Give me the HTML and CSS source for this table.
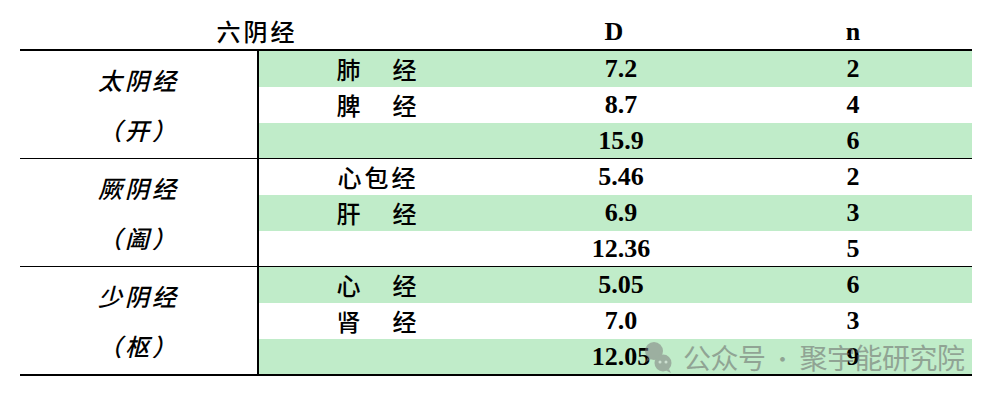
FILE: index.html
```html
<!DOCTYPE html>
<html lang="zh-CN">
<head>
<meta charset="utf-8">
<title>六阴经</title>
<link rel="stylesheet" href="styles.css">
</head>
<body>
<div class="page">
  <div class="table">
    <div class="head">
      <div class="h-name">六阴经</div>
      <div class="h-num h-d">D</div>
      <div class="h-num">n</div>
    </div>
    <div class="group">
      <div class="label"><span>太阴经</span><span>（开）</span></div>
      <div class="rows">
        <div class="row green"><span class="cjk wide">肺　经</span><span class="num d">7.2</span><span class="num">2</span></div>
        <div class="row"><span class="cjk wide">脾　经</span><span class="num d">8.7</span><span class="num">4</span></div>
        <div class="row green last"><span class="cjk"></span><span class="num d">15.9</span><span class="num">6</span></div>
      </div>
    </div>
    <div class="group">
      <div class="label"><span>厥阴经</span><span>（阖）</span></div>
      <div class="rows">
        <div class="row"><span class="cjk">心包经</span><span class="num d">5.46</span><span class="num">2</span></div>
        <div class="row green"><span class="cjk wide">肝　经</span><span class="num d">6.9</span><span class="num">3</span></div>
        <div class="row last"><span class="cjk"></span><span class="num d">12.36</span><span class="num">5</span></div>
      </div>
    </div>
    <div class="group end">
      <div class="label"><span>少阴经</span><span>（枢）</span></div>
      <div class="rows">
        <div class="row green"><span class="cjk wide">心　经</span><span class="num d">5.05</span><span class="num">6</span></div>
        <div class="row"><span class="cjk wide">肾　经</span><span class="num d">7.0</span><span class="num">3</span></div>
        <div class="row green last"><span class="cjk"></span><span class="num d">12.05</span><span class="num">9</span></div>
      </div>
    </div>
  </div>
  <div class="watermark">
    <svg class="wm-icon" width="30" height="34" viewBox="0 0 30 34">
      <circle cx="11" cy="11" r="9" fill="#7f7f7f"/>
      <path d="M4 18 L3 22 L8 19 Z" fill="#7f7f7f"/>
      <circle cx="20" cy="23" r="8.5" fill="#7f7f7f"/>
      <path d="M26 29 L28 33 L23 30.5 Z" fill="#7f7f7f"/>
      <circle cx="17" cy="22" r="1.5" fill="#d8d8d8"/>
      <circle cx="23" cy="22" r="1.5" fill="#d8d8d8"/>
    </svg>
    <span class="wm-text">公众号</span><span class="wm-dot">·</span><span class="wm-text">聚宇能研究院</span>
  </div>
</div>
</body>
</html>
```
FILE: styles.css
```css
html, body {
  margin: 0;
  padding: 0;
  background: #ffffff;
}
.page {
  position: relative;
  width: 996px;
  height: 400px;
}
.table {
  margin-left: 20px;
  width: 952px;
  color: #000;
}
.head {
  display: grid;
  grid-template-columns: 474px 240px 238px;
  height: 49px;
  border-bottom: 2px solid #000;
}
.h-name {
  font-family: "Noto Sans CJK SC", sans-serif;
  font-weight: 500;
  font-size: 24px;
  letter-spacing: 3px;
  line-height: 36px;
  padding-top: 13px;
  text-align: center;
}
.h-num {
  font-family: "Liberation Serif", serif;
  font-weight: bold;
  font-size: 26px;
  line-height: 36px;
  padding-top: 14px;
  text-align: center;
}
.group {
  display: flex;
  border-bottom: 1px solid #000;
}
.group.end {
  border-bottom-width: 2px;
}
.label {
  width: 237px;
  border-right: 2px solid #000;
  display: flex;
  flex-direction: column;
  justify-content: center;
  align-items: center;
  font-family: "Noto Sans CJK SC", sans-serif;
  font-weight: 500;
  font-style: italic;
  font-size: 24px;
  letter-spacing: 3px;
  line-height: 50px;
}
.rows {
  flex: 1;
}
.row {
  display: grid;
  grid-template-columns: 235px 240px 238px;
  height: 36px;
  align-items: center;
}
.row.last {
  height: 35px;
}
.row.green {
  background: #c0ecc9;
}
.cjk {
  font-family: "Noto Sans CJK SC", sans-serif;
  font-weight: 500;
  font-size: 24px;
  letter-spacing: 3px;
  line-height: 36px;
  text-align: center;
  padding-left: 3px;
}
.cjk.wide {
  letter-spacing: 4px;
  padding-left: 4px;
}
.num {
  font-family: "Liberation Serif", serif;
  font-weight: bold;
  font-size: 26px;
  line-height: 36px;
  text-align: center;
}
.num.d {
  padding-left: 14px;
}
.watermark {
  position: absolute;
  left: 643px;
  top: 340px;
  display: flex;
  align-items: center;
  opacity: 0.55;
}
.wm-icon {
  display: block;
  margin-right: 10px;
}
.wm-text {
  font-family: "Noto Sans CJK SC", sans-serif;
  font-size: 28px;
  line-height: 34px;
  color: #6a6a6a;
  letter-spacing: -0.5px;
}
.wm-dot {
  width: 34px;
  text-align: center;
  font-family: "Noto Sans CJK SC", sans-serif;
  font-size: 22px;
  line-height: 34px;
  color: #6a6a6a;
}
```
